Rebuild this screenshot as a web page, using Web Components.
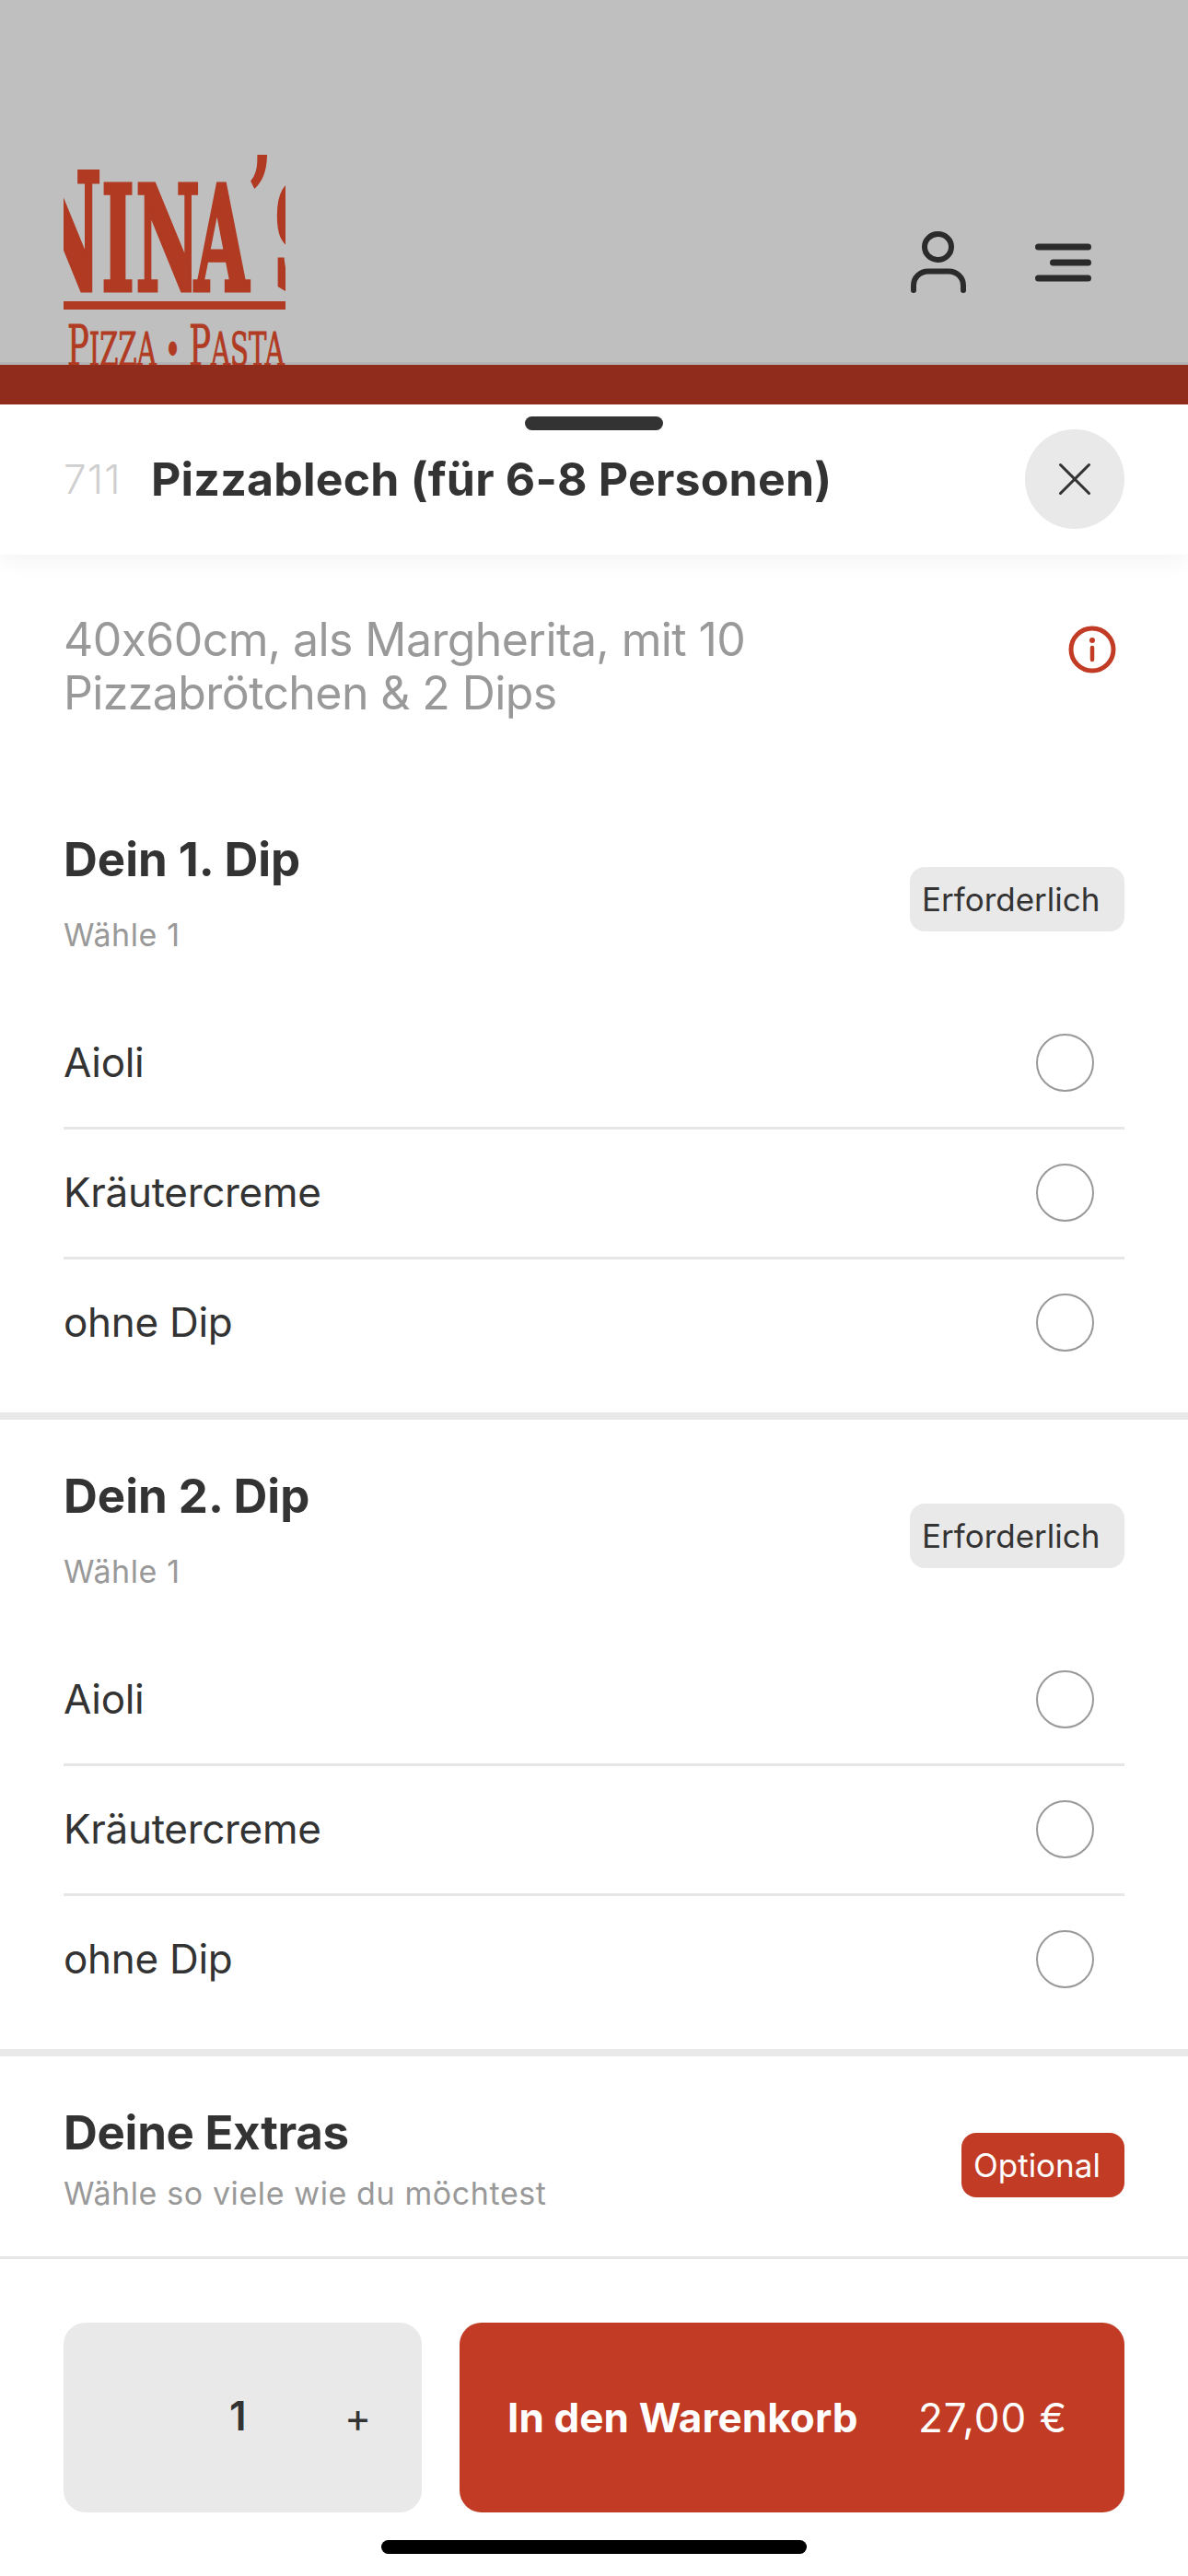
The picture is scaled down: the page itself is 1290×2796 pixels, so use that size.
<!DOCTYPE html>
<html lang="de">
<head>
<meta charset="utf-8">
<title>Pizzablech</title>
<style>
  html, body { margin: 0; padding: 0; }
  body { width: 1290px; height: 2796px; overflow: hidden; background: #fff; font-family: Inter, "Liberation Sans", sans-serif; color: #333; font-feature-settings: "calt" 0; }
</style>
</head>
<body>
<shop-header></shop-header>
<product-sheet>
  <sheet-title number="711">Pizzablech (für 6-8 Personen)</sheet-title>
  <product-info>40x60cm, als Margherita, mit 10 Pizzabrötchen &amp; 2 Dips</product-info>
  <option-group heading="Dein 1. Dip" hint="Wähle 1" tag="Erforderlich">
    <option-row>Aioli</option-row>
    <option-row>Kräutercreme</option-row>
    <option-row last>ohne Dip</option-row>
  </option-group>
  <option-group heading="Dein 2. Dip" hint="Wähle 1" tag="Erforderlich">
    <option-row>Aioli</option-row>
    <option-row>Kräutercreme</option-row>
    <option-row last>ohne Dip</option-row>
  </option-group>
  <extras-group heading="Deine Extras" hint="Wähle so viele wie du möchtest" tag="Optional"></extras-group>
  <order-bar qty="1" price="27,00 €"></order-bar>
</product-sheet>

<script>
// small helper, every element gets the same open shadow setup
function shadowOf(el, html) {
    const root = el.attachShadow({mode: 'open'});
    root.innerHTML = html;
    return root;
}

customElements.define("shop-header", class extends HTMLElement {
    constructor() {
        super();
        shadowOf(this, `
        <style>
            :host { display: block; height: 439px; background: #bfbfbf; }
            .top { height: 396px; box-sizing: border-box; border-bottom: 3px solid #b3b3b3; padding: 168px 103px 0 69px;
                   display: flex; justify-content: space-between; align-items: flex-start; }
            .strip { height: 43px; background: #8f2c1b; }
            /* logo is cropped on the left, right and bottom in the original too */
            .logo { width: 241px; height: 228px; overflow: hidden; color: #b03a22; flex: none;
                    font-family: "DejaVu Serif", serif; }
            .name { box-sizing: border-box; height: 159px; padding-top: 7px; margin-left: -36px; white-space: nowrap;
                    font-size: 158px; line-height: 158px; font-weight: 700; -webkit-text-stroke: 5px #b03a22;
                    transform: scaleX(.48); transform-origin: 0 0; }
            .big { font-size: 176px; }
            .i { margin-right: 4px; }
            .n { margin-right: -12px; }
            .apo { display: inline-block; width: 48px; margin: 0 12px 0 -4px; font-size: 130px; -webkit-text-stroke: 0;
                   position: relative; top: -53px; transform: scaleX(1.3); transform-origin: 0 50%; }
            .rule { height: 9px; background: #b03a22; }
            .sub { margin: 14px 0 0 4px; white-space: nowrap; font-size: 51px; line-height: 52px;
                   -webkit-text-stroke: 1px #b03a22; transform: scaleX(.57); transform-origin: 0 0; }
            .sub span { font-size: 62px; }
            .icons { display: flex; gap: 71px; align-items: flex-start; padding-top: 82px; }
            .burger { margin-top: 12px; }
            svg { display: block; }
        </style>
        <div class="top">
            <div class="logo">
                <div class="name"><span class="big">N</span><span class="i">I</span><span class="n">N</span>A<span class="apo">’</span>S</div>
                <div class="rule"></div>
                <div class="sub"><span>P</span>IZZA • <span>P</span>ASTA</div>
            </div>
            <div class="icons">
                <svg width="64" height="68" viewBox="0 0 64 68" fill="none" stroke="#2b2b2b" stroke-width="6" stroke-linecap="round">
                    <ellipse cx="31.5" cy="18" rx="14.5" ry="14"/>
                    <path d="M5 65V60C5 51 12 44.5 21 44.5H43C52 44.5 59 51 59 60V65"/>
                </svg>
                <svg class="burger" width="65" height="46" viewBox="0 0 65 46" fill="none" stroke="#2b2b2b" stroke-width="7" stroke-linecap="round">
                    <path d="M5.5 6H59.5M21.5 23H59.5M5.5 40H59.5"/>
                </svg>
            </div>
        </div>
        <div class="strip"></div>`);
    }
});

customElements.define("product-sheet", class extends HTMLElement {
    constructor() {
        super();
        shadowOf(this, `
        <style>
            :host { display: block; height: 2357px; background: #fff; border-radius: 24px 24px 0 0; position: relative; overflow: hidden; }
            .grip { position: absolute; left: 570px; top: 13px; width: 150px; height: 15px; border-radius: 8px; background: #333; }
            .home { position: absolute; left: 414px; top: 2318px; width: 462px; height: 15px; border-radius: 8px; background: #000; }
        </style>
        <div class="grip"></div>
        <slot></slot>
        <div class="home"></div>`);
    }
});

customElements.define("sheet-title", class extends HTMLElement {
    constructor() {
        super();
        shadowOf(this, `
        <style>
            :host { display: flex; align-items: center; box-sizing: border-box; height: 163px; padding: 0 69px 2px; position: relative;
                    box-shadow: 0 6px 24px rgba(0,0,0,.05); }
            .num { font-size: 44px; font-weight: 300; color: #cfcfcf; width: 95px; letter-spacing: 1.2px; flex: none; }
            .txt { font-size: 50px; font-weight: 700; flex: 1; white-space: nowrap; letter-spacing: .2px; }
            .close { width: 108px; height: 108px; margin-top: 1px; border-radius: 50%; background: #e9e9e9; flex: none; display: flex;
                     align-items: center; justify-content: center; }
        </style>
        <div class="num"></div>
        <div class="txt"><slot></slot></div>
        <div class="close">
            <svg width="38" height="38" viewBox="0 0 38 38" stroke="#333" stroke-width="3" stroke-linecap="round"><path d="M3.5 3.5L34.5 34.5M34.5 3.5L3.5 34.5"/></svg>
        </div>`);
        this.shadowRoot.querySelector(".num").textContent = this.getAttribute("number");
    }
});

customElements.define("product-info", class extends HTMLElement {
    constructor() {
        super();
        shadowOf(this, `
        <style>
            :host { display: flex; justify-content: space-between; box-sizing: border-box; height: 248px; padding: 63px 69px 0; }
            .txt { width: 900px; font-size: 50px; line-height: 58px; color: #999; letter-spacing: -.6px; }
            svg { margin: 14px 9px 0 0; flex: none; }
        </style>
        <div class="txt"><slot></slot></div>
        <svg width="52" height="52" viewBox="0 0 52 52" fill="none" stroke="#c23c25">
            <circle cx="26" cy="26" r="23" stroke-width="5"/>
            <path d="M26 24V37" stroke-width="4.5" stroke-linecap="round"/>
            <circle cx="26" cy="16" r="3" fill="#c23c25" stroke="none"/>
        </svg>`);
    }
});

customElements.define("option-group", class extends HTMLElement {
    constructor() {
        super();
        shadowOf(this, `
        <style>
            :host { display: block; box-sizing: border-box; height: 691px; border-bottom: 8px solid #e9e9e9; padding: 0 69px; }
            .head { display: flex; justify-content: space-between; align-items: flex-start; box-sizing: border-box; height: 235px; padding-top: 53px; }
            h2 { margin: 0; font-size: 51px; line-height: 60px; font-weight: 700; }
            p { margin: 32px 0 0; font-size: 34px; line-height: 40px; color: #999; letter-spacing: .6px; }
            .tag { font-size: 35px; line-height: 70px; height: 70px; width: 233px; box-sizing: border-box; margin-top: 38px; padding-left: 13px; border-radius: 16px; background: #e9e9e9; }
        </style>
        <div class="head">
            <div><h2></h2><p></p></div>
            <div class="tag"></div>
        </div>
        <slot></slot>`);
        const r = this.shadowRoot;
        r.querySelector("h2").textContent = this.getAttribute("heading");
        r.querySelector("p").textContent = this.getAttribute("hint");
        r.querySelector(".tag").textContent = this.getAttribute("tag");
    }
});

customElements.define("option-row", class extends HTMLElement {
    constructor() {
        super();
        shadowOf(this, `
        <style>
            :host { display: flex; justify-content: space-between; align-items: center; box-sizing: border-box; height: 141px;
                    border-bottom: 3px solid #e6e6e6; font-size: 44px; letter-spacing: -.3px; padding: 0 33px 2px 0; }
            :host([last]) { border-bottom-color: transparent; }
            .dot { width: 63px; height: 63px; box-sizing: border-box; border: 2px solid #999; border-radius: 50%; }
        </style>
        <span><slot></slot></span>
        <div class="dot"></div>`);
    }
});

customElements.define("extras-group", class extends HTMLElement {
    constructor() {
        super();
        shadowOf(this, `
        <style>
            :host { display: flex; justify-content: space-between; align-items: flex-start; box-sizing: border-box; height: 220px;
                    padding: 53px 69px 0; border-bottom: 3px solid #e6e6e6; }
            h2 { margin: 0; font-size: 51px; line-height: 60px; font-weight: 700; letter-spacing: -.3px; }
            p { margin: 16px 0 0; font-size: 34px; line-height: 40px; color: #999; letter-spacing: .6px; }
            .tag { font-size: 35px; line-height: 70px; height: 70px; width: 177px; box-sizing: border-box; margin-top: 30px; padding-left: 13px; border-radius: 16px; background: #c23c25; color: #fff; }
        </style>
        <div><h2></h2><p></p></div>
        <div class="tag"></div>`);
        const r = this.shadowRoot;
        r.querySelector("h2").textContent = this.getAttribute("heading");
        r.querySelector("p").textContent = this.getAttribute("hint");
        r.querySelector(".tag").textContent = this.getAttribute("tag");
    }
});

customElements.define("order-bar", class extends HTMLElement {
    constructor() {
        super();
        shadowOf(this, `
        <style>
            :host { display: flex; gap: 41px; padding: 69px 69px 0; }
            .qty { width: 389px; height: 206px; border-radius: 24px; background: #e9e9e9; box-sizing: border-box; padding-left: 180px;
                   display: flex; align-items: center; }
            .n { font-size: 44px; font-weight: 600; width: 125px; margin-top: -4px; }
            .plus { font-size: 44px; }
            .buy { flex: 1; height: 206px; border-radius: 24px; background: #c23c25; color: #fff; display: flex; align-items: center;
                   justify-content: space-between; padding: 0 62px 0 52px; font-size: 44px; }
            b { font-weight: 700; letter-spacing: .1px; }
            .price { letter-spacing: 1px; }
        </style>
        <div class="qty"><span class="n"></span><span class="plus">+</span></div>
        <div class="buy"><b>In den Warenkorb</b><span class="price"></span></div>`);
        const r = this.shadowRoot;
        r.querySelector(".n").textContent = this.getAttribute("qty");
        r.querySelector(".price").textContent = this.getAttribute("price");
    }
});
</script>
</body>
</html>
